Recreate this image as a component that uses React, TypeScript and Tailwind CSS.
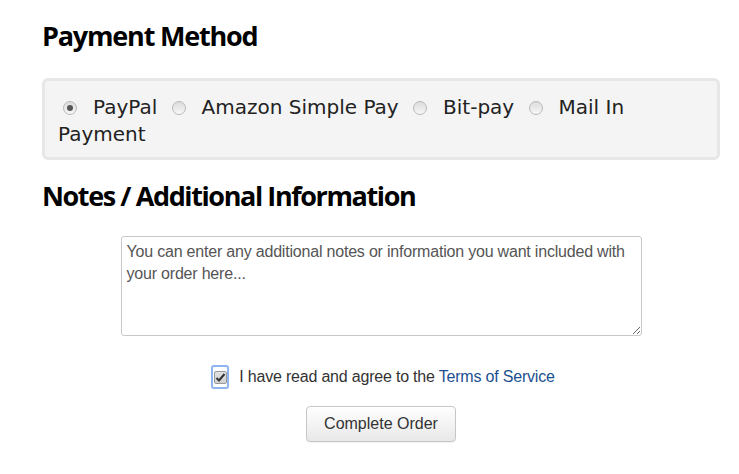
import { Fragment, useState } from 'react'

const methods = [['PayPal'], ['Amazon Simple Pay'], ['Bit-pay'], ['Mail In', ' Payment']]

function Radio({ checked, first, onClick }: { checked: boolean; first: boolean; onClick: () => void }) {
  return (
    <span
      role="radio"
      aria-checked={checked}
      onClick={onClick}
      className={`relative mr-[16px] inline-block h-[14px] w-[14px] translate-y-[1px] cursor-pointer rounded-full border border-[#b9b9b9] bg-gradient-to-b from-[#dcdcdc] to-[#f7f7f7] align-baseline ${
        first ? 'ml-[5px]' : 'ml-[8px]'
      }`}
    >
      {checked && (
        <span className="absolute left-[3px] top-[3px] h-[6px] w-[6px] rounded-full bg-[#555]" />
      )}
    </span>
  )
}

export default function App() {
  const [method, setMethod] = useState(0)
  const [agreed, setAgreed] = useState(true)

  return (
    <div className="min-h-[474px] w-[739px] bg-white">
      <div className="ml-[42px] w-[678px] pt-[18px]">
        <h2 className="font-['Open_Sans',sans-serif] text-[27px] font-bold leading-[36px] tracking-[-1.2px] text-black">
          Payment Method
        </h2>

        <div className="mt-[24px] h-[82px] rounded-[6px] border-[3px] border-[#e7e7e7] bg-[#f4f4f4] px-[13px] pt-[13px] font-['DejaVu_Sans',Verdana,sans-serif] text-[20px] leading-[27px] text-[#222]">
          {methods.map((parts, i) => (
            <Fragment key={i}>
              {i > 0 && ' '}
              <Radio checked={method === i} first={i === 0} onClick={() => setMethod(i)} />
              {parts.map((p) => (
                <span key={p}>{p}</span>
              ))}
            </Fragment>
          ))}
        </div>

        <h2 className="mt-[18px] font-['Open_Sans',sans-serif] text-[27px] font-bold leading-[36px] tracking-[-1.4px] text-black">
          Notes / Additional Information
        </h2>

        <div className="mt-[22px] flex flex-col items-center">
          <textarea
            className="h-[100px] w-[521px] resize rounded-[3px] border border-[#c8c8c8] bg-white px-[5px] py-[4px] font-['Liberation_Sans',Arial,sans-serif] text-[16px] leading-[22px] tracking-[-0.2px] text-[#555] outline-none placeholder:text-[#555]"
            placeholder="You can enter any additional notes or information you want included with your order here..."
          />

          <label
            className="mt-[29px] ml-[4px] flex cursor-pointer items-center font-['Liberation_Sans',Arial,sans-serif] text-[16px] tracking-[-0.2px] text-[#333]"
            onClick={() => setAgreed(!agreed)}
          >
            <span className="flex h-[24px] w-[18px] items-center justify-center rounded-[3px] border-2 border-[#8fb4ee]">
              <span className="flex h-[13px] w-[13px] items-center justify-center rounded-[2px] border border-[#9a9a9a] bg-gradient-to-b from-[#e2e2e2] to-[#cfcfcf]">
                {agreed && (
                  <svg width="11" height="11" viewBox="0 0 11 11">
                    <path d="M1.5 6 L4 8.5 L9.5 2" stroke="#333" strokeWidth="2" fill="none" />
                  </svg>
                )}
              </span>
            </span>
            <span className="ml-[10px]">
              I have read and agree to the <a className="text-[#1b4f8f]">Terms of Service</a>
            </span>
          </label>

          <button
            type="button"
            className="mt-[17px] h-[36px] w-[150px] rounded-[4px] border border-[#c6c6c6] bg-gradient-to-b from-white to-[#e8e8e8] font-['Liberation_Sans',Arial,sans-serif] text-[16px] text-[#333] shadow-[0_1px_1px_rgba(0,0,0,0.05)]"
          >
            Complete Order
          </button>
        </div>
      </div>
    </div>
  )
}
